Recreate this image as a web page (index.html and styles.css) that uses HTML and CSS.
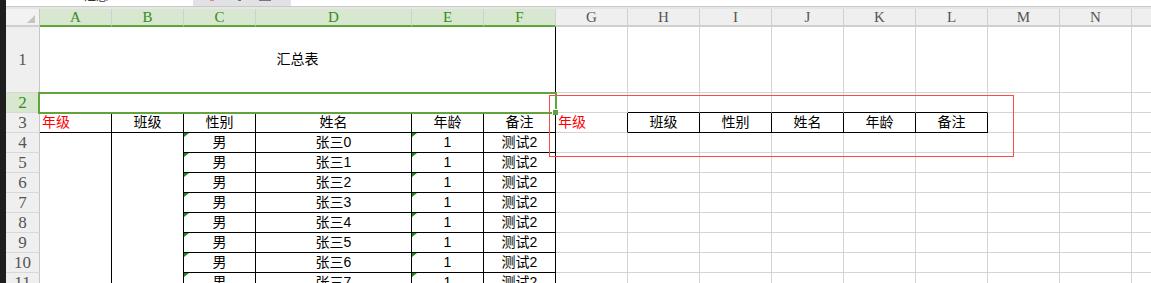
FILE: index.html
```
<!DOCTYPE html>
<html>
	<head>
		<meta charset="UTF-8">
		<title>汇总表</title>
		<link rel="stylesheet" href="styles.css">
	</head>
	<body>
		<div class="edge"></div>
		<div class="book">
			<div class="tabs">
				<div class="tab"><span class="tabname">汇总</span></div>
				<div class="tab active"><i class="ico r"></i><i class="ico g"></i><i class="ico d"></i></div>
				<div class="tab"></div>
			</div>
			<div class="sheet">
				<!-- column headers -->
				<div class="hd corner"></div>
				<div class="hd on">A</div><div class="hd on">B</div><div class="hd on">C</div>
				<div class="hd on">D</div><div class="hd on">E</div><div class="hd on">F</div>
				<div class="hd">G</div><div class="hd">H</div><div class="hd">I</div>
				<div class="hd">J</div><div class="hd">K</div><div class="hd">L</div>
				<div class="hd">M</div><div class="hd">N</div><div class="hd"></div>

				<!-- row 1 -->
				<div class="rh tall">1</div>
				<div class="title k">汇总表</div>
				<div></div><div></div><div></div><div></div><div></div><div></div><div></div><div></div><div></div>

				<!-- row 2 -->
				<div class="rh on">2</div>
				<div class="wide k"></div>
				<div></div><div class="kb"></div><div class="kb"></div><div class="kb"></div><div class="kb"></div><div class="kb"></div><div></div><div></div><div></div>

				<!-- row 3 -->
				<div class="rh">3</div>
				<div class="k kb red">年级</div>
				<div class="k kb">班级</div>
				<div class="k kb">性别</div>
				<div class="k kb">姓名</div>
				<div class="k kb">年龄</div>
				<div class="k kb">备注</div>
				<div class="k red">年级</div>
				<div class="k kb">班级</div>
				<div class="k kb">性别</div>
				<div class="k kb">姓名</div>
				<div class="k kb">年龄</div>
				<div class="k kb">备注</div>
				<div></div><div></div><div></div>

				<!-- row 4 -->
				<div class="rh">4</div>
				<div class="merged k"></div>
				<div class="merged k"></div>
				<div class="k kb tx">男</div><div class="k kb">张三0</div><div class="k kb tx">1</div><div class="k kb">测试2</div>
				<div></div><div></div><div></div><div></div><div></div><div></div><div></div><div></div><div></div>

				<!-- row 5 -->
				<div class="rh">5</div>
				<div class="k kb tx">男</div><div class="k kb">张三1</div><div class="k kb tx">1</div><div class="k kb">测试2</div>
				<div></div><div></div><div></div><div></div><div></div><div></div><div></div><div></div><div></div>

				<!-- row 6 -->
				<div class="rh">6</div>
				<div class="k kb tx">男</div><div class="k kb">张三2</div><div class="k kb tx">1</div><div class="k kb">测试2</div>
				<div></div><div></div><div></div><div></div><div></div><div></div><div></div><div></div><div></div>

				<!-- row 7 -->
				<div class="rh">7</div>
				<div class="k kb tx">男</div><div class="k kb">张三3</div><div class="k kb tx">1</div><div class="k kb">测试2</div>
				<div></div><div></div><div></div><div></div><div></div><div></div><div></div><div></div><div></div>

				<!-- row 8 -->
				<div class="rh">8</div>
				<div class="k kb tx">男</div><div class="k kb">张三4</div><div class="k kb tx">1</div><div class="k kb">测试2</div>
				<div></div><div></div><div></div><div></div><div></div><div></div><div></div><div></div><div></div>

				<!-- row 9 -->
				<div class="rh">9</div>
				<div class="k kb tx">男</div><div class="k kb">张三5</div><div class="k kb tx">1</div><div class="k kb">测试2</div>
				<div></div><div></div><div></div><div></div><div></div><div></div><div></div><div></div><div></div>

				<!-- row 10 -->
				<div class="rh">10</div>
				<div class="k kb tx">男</div><div class="k kb">张三6</div><div class="k kb tx">1</div><div class="k kb">测试2</div>
				<div></div><div></div><div></div><div></div><div></div><div></div><div></div><div></div><div></div>

				<!-- row 11 -->
				<div class="rh">11</div>
				<div class="k kb tx">男</div><div class="k kb">张三7</div><div class="k kb tx">1</div><div class="k kb">测试2</div>
				<div></div><div></div><div></div><div></div><div></div><div></div><div></div><div></div><div></div>

				<!-- overlays -->
				<div class="mark"></div>
				<div class="sel"></div>
			</div>
		</div>
	</body>
</html>
```

FILE: styles.css
```
body {
	margin: 0;
	height: 283px;
	overflow: hidden;
	display: flex;
	background: #fff;
	font-family: "Liberation Sans", "Noto Sans CJK SC", sans-serif;
}
.edge {
	flex: none;
	width: 6px;
	background: #1e1e1e;
}
.book {
	flex: 1;
	overflow: hidden;
	background: #e6e6e6;
}
.tabs {
	display: flex;
	height: 6px;
	border-bottom: 1px solid #c9c9c9;
	margin-bottom: 2px;
	overflow: hidden;
}
.tab {
	background: #fff;
	width: 187px;
	overflow: hidden;
}
.tab:last-child {
	flex: 1;
}
.tab.active {
	width: 98px;
	background: #e2e2e4;
	display: flex;
	align-items: flex-end;
}
.tabname {
	display: block;
	margin: -9px 0 0 78px;
	font-size: 12px;
	line-height: 12px;
	color: #333;
}
.ico {
	display: block;
	width: 4px;
	height: 2px;
	margin-bottom: 5px;
}
.ico.r {
	background: #f08080;
	margin-left: 17px;
}
.ico.g {
	background: #3c9a3c;
	width: 3px;
	margin-left: 24px;
}
.ico.d {
	background: #777;
	width: 12px;
	margin-left: 18px;
}
.sheet {
	display: grid;
	grid-template-columns: 34px repeat(3, 72px) 156px repeat(11, 72px);
	grid-template-rows: 18px 66px repeat(10, 20px);
	position: relative;
	background: #fff;
}
.sheet > div {
	box-sizing: border-box;
	border-right: 1px solid #d4d4d4;
	border-bottom: 1px solid #d4d4d4;
	font-size: 14px;
	line-height: 19px;
	text-align: center;
	white-space: nowrap;
	overflow: hidden;
	position: relative;
	color: #000;
}
.sheet > div.hd {
	background: #efefef;
	border-right-color: #d0d0d0;
	border-bottom: 2px solid #cfcfcf;
	font-family: "Liberation Serif", serif;
	font-size: 15px;
	line-height: 17px;
	color: #555;
}
.sheet > div.hd.on {
	background: #d7e7d0;
	color: #3a8a1c;
	border-bottom-color: #5fa53a;
}
.sheet > div.corner {
	background: #f2f2f2;
	border-right-color: #c6c6c6;
}
.corner::after {
	content: "";
	position: absolute;
	right: 4px;
	bottom: 2px;
	border-left: 8px solid transparent;
	border-bottom: 8px solid #c4c4c4;
}
.sheet > div.rh {
	background: #efefef;
	border-right-color: #c6c6c6;
	border-bottom-color: #d8d8d8;
	font-family: "Liberation Serif", serif;
	font-size: 17px;
	line-height: 20px;
	color: #555;
}
.sheet > div.rh.on {
	background: #d7e7d0;
	color: #3a8a1c;
}
.sheet > div.tall {
	line-height: 65px;
}
.sheet > div.title {
	grid-column: span 6;
	line-height: 65px;
	border-bottom-color: #fff;
}
.sheet > div.wide {
	grid-column: span 6;
}
.sheet > div.merged {
	grid-row: span 8;
	border-bottom: none;
}
.sheet > div.k {
	border-right-color: #000;
}
.sheet > div.kb {
	border-bottom-color: #000;
}
.sheet > div.red {
	color: #f00;
	text-align: left;
	padding-left: 2px;
}
.tx::before {
	content: "";
	position: absolute;
	left: 0;
	top: 0;
	border-top: 4px solid #1b8a1b;
	border-right: 5px solid transparent;
}
/* copy range marker and current selection lie over the cells */
.sheet > div.mark {
	position: absolute;
	left: 543px;
	top: 86px;
	width: 465px;
	height: 62px;
	border: 1px solid #ff4848;
}
.sheet > div.sel {
	position: absolute;
	left: 32px;
	top: 83px;
	width: 519px;
	height: 22px;
	border: 2px solid #62a43c;
	overflow: visible;
}
.sel::after {
	content: "";
	position: absolute;
	right: -3px;
	bottom: -3px;
	width: 5px;
	height: 5px;
	background: #62a43c;
	border-left: 1px solid #fff;
	border-top: 1px solid #fff;
}
```
